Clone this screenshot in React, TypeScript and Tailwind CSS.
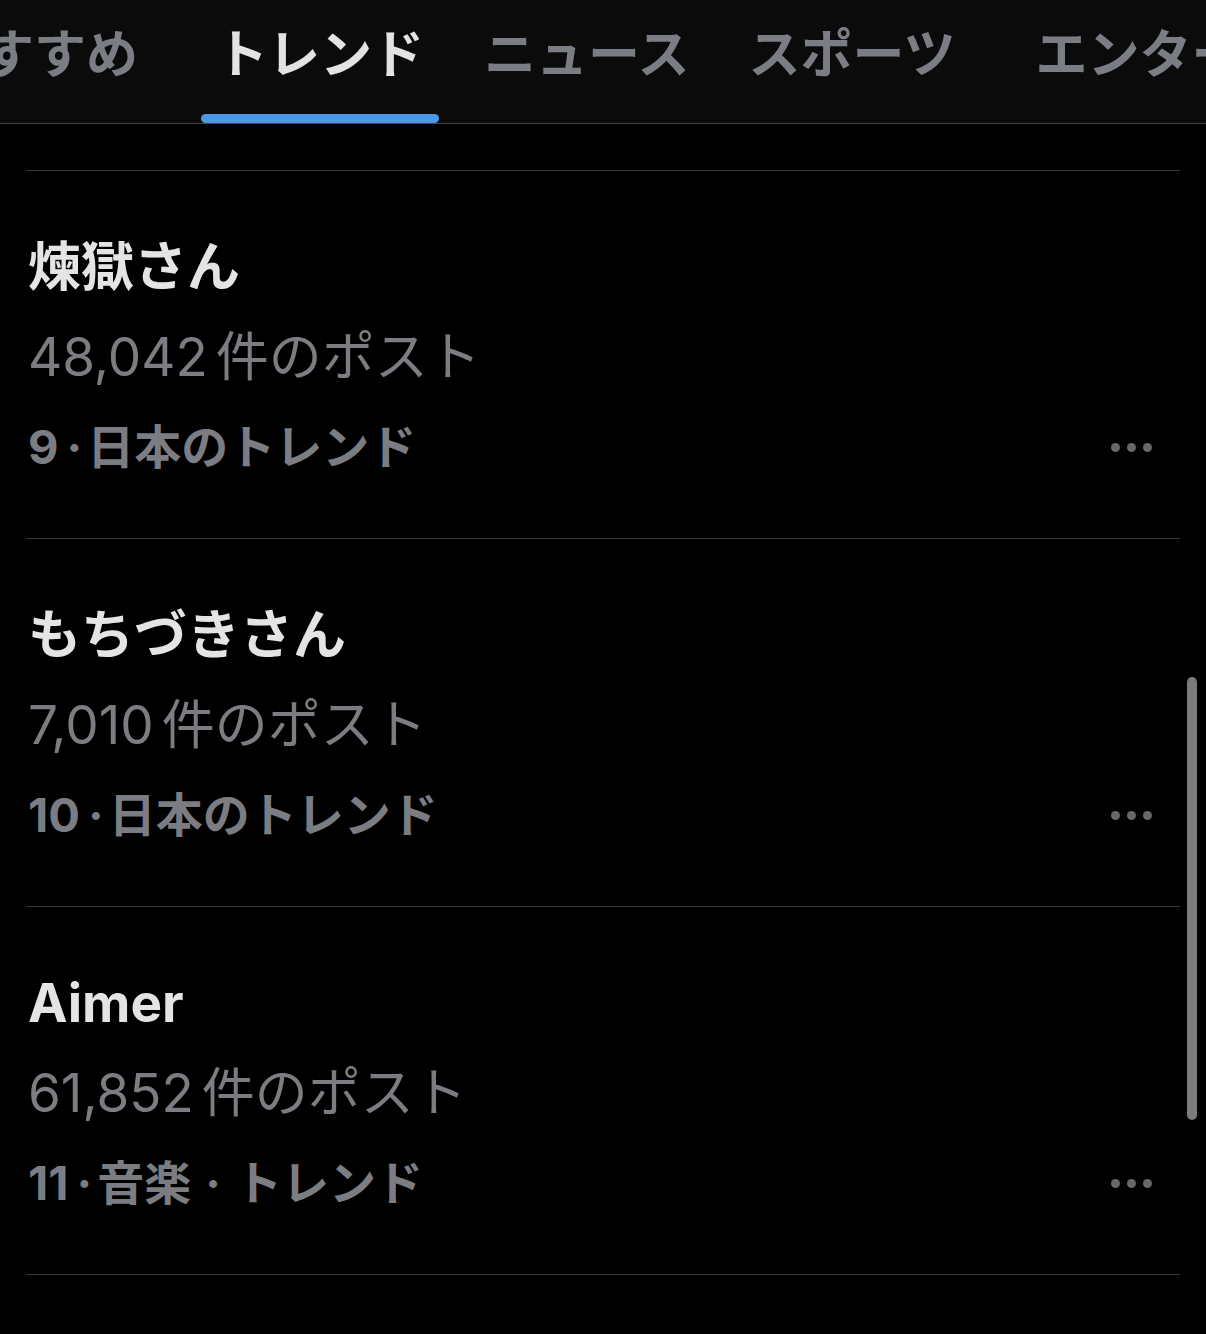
import React from 'react';

type Trend = {
  title: string;
  posts: string;
  rank: string;
  meta: string[];
};

const tabs = [
  { name: 'おすすめ', gap: 'ml-0' },
  { name: 'トレンド', gap: 'ml-[48px]', active: true },
  { name: 'ニュース', gap: 'ml-[30px]' },
  { name: 'スポーツ', gap: 'ml-[29px]' },
  { name: 'エンターテイメント', gap: 'ml-[50px]' },
];

const trends: Trend[] = [
  { title: '煉獄さん', posts: '48,042', rank: '9', meta: ['日本のトレンド'] },
  { title: 'もちづきさん', posts: '7,010', rank: '10', meta: ['日本のトレンド'] },
  { title: 'Aimer', posts: '61,852', rank: '11', meta: ['音楽', 'トレンド'] },
];

function MoreDots() {
  return (
    <div className="flex items-center gap-[7px] mr-[28px]">
      <span className="w-[9px] h-[9px] rounded-full bg-[#69696b]" />
      <span className="w-[9px] h-[9px] rounded-full bg-[#69696b]" />
      <span className="w-[9px] h-[9px] rounded-full bg-[#69696b]" />
    </div>
  );
}

function TrendRow({ trend }: { trend: Trend }) {
  return (
    <li className="border-t border-[#38383a] pt-[51px] pb-[46px]">
      <div className="leading-[90px] text-[53px] font-bold text-[#e4e4e4] pl-[2px]">{trend.title}</div>
      <div className="leading-[90px] text-[53px] font-normal text-[#7b7d82] pl-[2px]">
        {trend.posts}
        <span className="ml-[8px]">件のポスト</span>
      </div>
      <div className="flex items-center justify-between h-[90px]">
        <div className="leading-[90px] text-[47px] font-bold text-[#7b7d82] pl-[2px]">
          {trend.rank}
          <span className="ml-[8px] mr-[5px]">·</span>
          {trend.meta.map((m, i) => (
            <span key={m}>
              {i > 0 && <span className="mx-[14px]">·</span>}
              {m}
            </span>
          ))}
        </div>
        <MoreDots />
      </div>
    </li>
  );
}

export default function App() {
  return (
    <div className="relative w-[1206px] h-[1334px] overflow-hidden bg-black font-[Inter,'Noto_Sans_CJK_JP',sans-serif]">
      {/* Tab bar */}
      <nav className="h-[124px] bg-[#0b0b0c] border-b border-[#444446] overflow-hidden">
        <div className="flex -ml-[85px] w-max">
          {tabs.map((tab) => (
            <div key={tab.name} className={`${tab.gap} flex flex-col`}>
              <div
                className={`h-[114px] pt-[22px] px-[15px] leading-[66px] text-[52px] font-bold whitespace-nowrap ${
                  tab.active ? 'text-[#e3e3e3]' : 'text-[#7a7d83]'
                }`}
              >
                {tab.name}
              </div>
              <div className={`h-[9px] rounded-full ${tab.active ? 'bg-[#4a98e6]' : 'bg-transparent'}`} />
            </div>
          ))}
        </div>
      </nav>

      <div className="h-[46px]" />

      {/* Trends list */}
      <ul className="px-[26px]">
        {trends.map((t) => (
          <TrendRow key={t.title} trend={t} />
        ))}
        <li className="border-t border-[#38383a]" />
      </ul>

      {/* Scroll indicator */}
      <div className="absolute left-[1187px] top-[677px] w-[10px] h-[443px] rounded-full bg-[#7b7b7b]" />
    </div>
  );
}
